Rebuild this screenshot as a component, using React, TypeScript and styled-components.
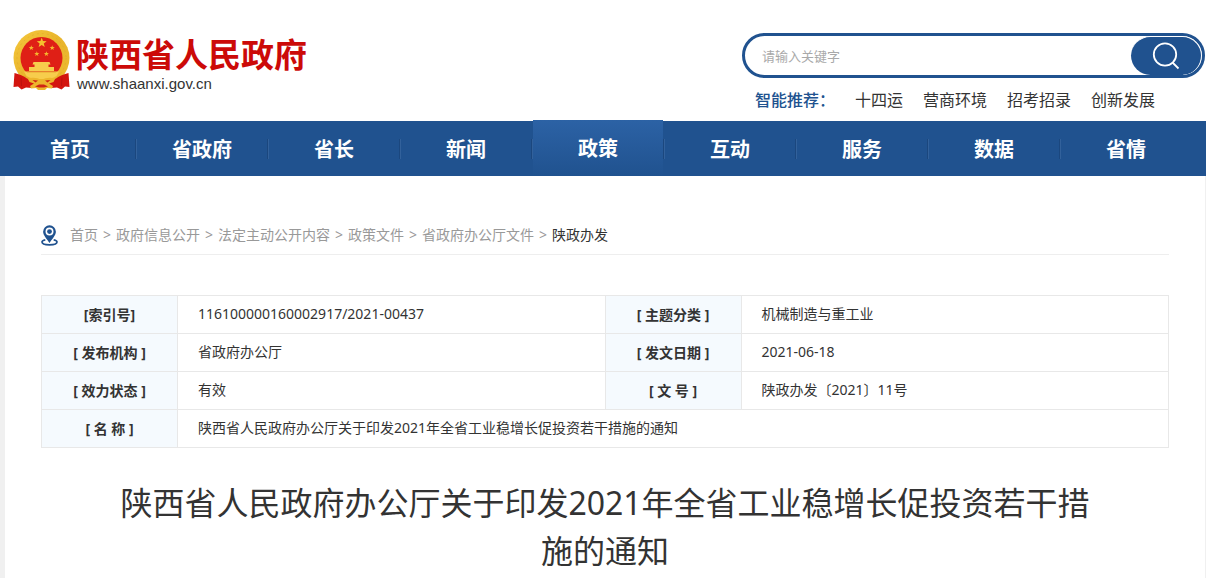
import React from 'react';
import styled, { createGlobalStyle, css } from 'styled-components';

const blue = '#20528f';
const line = '#e8e8e8';

const GlobalStyle = createGlobalStyle`
  *, *::before, *::after { box-sizing: border-box; }
  body {
    margin: 0;
    background: #f0f0f0;
    color: #333;
    font: 14px/20px 'Noto Sans', 'Noto Sans CJK SC', sans-serif;
  }
  a { color: inherit; text-decoration: none; }
  ul, ol, h1 { margin: 0; padding: 0; list-style: none; }
`;

const Page = styled.div`
  overflow: hidden;
`;

const Header = styled.header`
  display: flex;
  justify-content: space-between;
  align-items: flex-start;
  padding: 30px 1px 9px 13px;
  background: #fff;
`;

const Brand = styled.a`
  display: flex;
  align-items: flex-start;
  gap: 5px;
`;

const BrandText = styled.span`
  display: flex;
  flex-direction: column;
  padding-top: 2px;
`;

const BrandName = styled.span`
  color: #cc0a08;
  font-size: 33px;
  line-height: 46px;
  font-weight: 700;
  white-space: nowrap;
`;

const BrandUrl = styled.span`
  padding-left: 1px;
  color: #333;
  font-family: 'Liberation Sans', sans-serif;
  font-size: 15px;
  line-height: 12px;
`;

const SearchArea = styled.div`
  width: 463px;
  padding-top: 3px;
`;

const SearchBox = styled.form`
  display: flex;
  height: 45px;
  border: 3px solid ${blue};
  border-radius: 23px;
  overflow: hidden;
`;

const SearchInput = styled.input`
  flex: 1;
  min-width: 0;
  border: 0;
  outline: 0;
  padding: 0 17px;
  background: transparent;
  font: 13px/20px 'Noto Sans', 'Noto Sans CJK SC', sans-serif;
  &::placeholder { color: #a9a9a9; opacity: 1; }
`;

const SearchButton = styled.button`
  display: flex;
  align-items: center;
  justify-content: center;
  width: 71px;
  padding: 0;
  border: 1px solid #fff;
  border-width: 1px 1px 0 0;
  border-radius: 20px;
  background: ${blue};
  cursor: pointer;
`;

const HotWords = styled.div`
  display: flex;
  gap: 20px;
  padding: 10px 0 0 13px;
  font-size: 16px;
  line-height: 24px;
  white-space: nowrap;
`;

const HotLabel = styled.span`
  color: ${blue};
  font-weight: 500;
`;

const Nav = styled.nav`
  background: ${blue};
`;

const NavList = styled.ul`
  display: flex;
  height: 55px;
  padding-left: 5px;
`;

const NavItem = styled.li`
  display: flex;
  align-items: center;
  width: 132px;
  &::after {
    content: '';
    width: 2px;
    height: 20px;
    border-left: 1px solid #1b477e;
    border-right: 1px solid #32619b;
  }
  &:last-child::after { visibility: hidden; }
`;

const NavLink = styled.a<{ $active?: boolean }>`
  flex: 1;
  height: 55px;
  color: #fff;
  font-size: 20px;
  line-height: 58px;
  font-weight: 700;
  text-align: center;
  ${(p) =>
    p.$active &&
    css`
      height: 56px;
      margin-top: -1px;
      background: linear-gradient(#2c62a5, ${blue});
    `}
`;

const Main = styled.main`
  margin: 0 1px 0 5px;
  padding: 41px 36px 3px;
  background: #fff;
`;

const Crumbs = styled.nav`
  display: flex;
  align-items: center;
  gap: 12px;
  height: 38px;
  border-bottom: 1px solid #eee;
  color: #999;
`;

const CrumbList = styled.ol`
  display: flex;
  padding-bottom: 2px;
`;

const Crumb = styled.li`
  &:not(:last-child)::after {
    content: '>';
    padding: 0 5px;
  }
  &:last-child { color: #333; }
`;

const InfoTable = styled.table`
  width: 100%;
  margin-top: 40px;
  border-collapse: collapse;
  table-layout: fixed;
`;

const Label = styled.th`
  height: 38px;
  padding: 1px 0 0;
  border: 1px solid ${line};
  background: #f5fafe;
  font-weight: 700;
  text-align: center;
`;

const Value = styled.td`
  height: 38px;
  padding: 0 20px 1px;
  border: 1px solid ${line};
`;

const Title = styled.h1`
  padding: 31px 72px 0;
  font-size: 32px;
  line-height: 48px;
  font-weight: 400;
  text-align: center;
`;

const star = (cx: number, cy: number, r: number) =>
  Array.from({ length: 10 }, (_, i) => {
    const a = (Math.PI / 5) * i - Math.PI / 2;
    const d = i % 2 ? r * 0.42 : r;
    return `${(cx + d * Math.cos(a)).toFixed(2)},${(cy + d * Math.sin(a)).toFixed(2)}`;
  }).join(' ');

const Emblem = () => (
  <svg width="58" height="61" viewBox="0 0 58 61" aria-hidden="true">
    <defs>
      <linearGradient id="gold" x1="0" y1="0" x2="1" y2="1">
        <stop offset="0" stopColor="#f5c83c" />
        <stop offset="0.5" stopColor="#e9b52c" />
        <stop offset="1" stopColor="#edba30" />
      </linearGradient>
    </defs>
    <circle cx="28.5" cy="28" r="28" fill="url(#gold)" />
    <circle cx="28.5" cy="28" r="24.5" fill="none" stroke="#d79a22" strokeWidth="1" strokeDasharray="2 3" opacity="0.35" />
    <circle cx="28.5" cy="28" r="21" fill="#df1f16" />
    <polygon points={star(28.7, 12.8, 5.2)} fill="#f5c02e" />
    <polygon points={star(18.3, 17.9, 2.7)} fill="#f5b52e" />
    <polygon points={star(39.2, 17.9, 2.7)} fill="#f5b52e" />
    <polygon points={star(23.8, 23.9, 2.7)} fill="#f5b52e" />
    <polygon points={star(33.4, 23.9, 2.7)} fill="#f5b52e" />
    <path d="M20.500 32 H36.500 L37.500 34.500 H19.500 Z M21.500 34.500 H35.500 V37 H41 V41 H16 V37 H21.500 Z" fill="#f7cd4c" />
    <path d="M11 41.500 H46 L43.500 46 C40 48.500 35 49 28.500 49 C22 49 17 48.500 13.500 46 Z" fill="#f7cd4c" />
    <path d="M14 42 H43" stroke="#e29a26" strokeWidth="0.700" />
    <path d="M1.500 43 C6 44 11 46 14 48.500 C17 50 18.500 50.500 21 50.500 H36 C38.500 50.500 40 50 43 48.500 C46 46 51 44 55.500 43 L56.500 57 L52 56.500 L48.500 59.500 L44 57.500 L38 58 H19 L13 57.500 L8.500 59.500 L5 56.500 L0.500 57 Z" fill="#d3150f" />
    <path d="M15 49 C20 46.500 24 48 28.500 49.500 C33 48 37 46.500 42 49 L40.500 52 L36 53.500 L40 56 L39 58.500 L34 58 L32 60 H25 L23 58 L18 58.500 L17 56 L21 53.500 L16.500 52 Z" fill="#edb52c" />
    <path d="M19.500 50 L25 50.500 L22.500 52.500 Z M37.500 50 L32 50.500 L34.500 52.500 Z M22 56.500 L26 54.500 H31 L35 56.500 L31 57.500 H26 Z" fill="#cf2414" />
    <path d="M8 47.500 L8.500 56 M49 47.500 L48.500 56" stroke="#b5100c" strokeWidth="0.800" />
  </svg>
);

const SearchIcon = () => (
  <svg width="28" height="28" viewBox="0 0 28 28" fill="none" stroke="#fff" strokeWidth="1.8" aria-hidden="true">
    <circle cx="13" cy="12.500" r="11.200" />
    <path d="M20.500 20.500 L26.500 26.500" />
  </svg>
);

const PinIcon = () => (
  <svg width="17" height="21" viewBox="0 0 17 21" aria-hidden="true">
    <path d="M4.300 14.800 C2.300 15.200 1 16 1 17 C1 18.800 4.300 19.800 8.500 19.800 S16 18.800 16 17 C16 16 14.700 15.200 12.700 14.800" fill="none" stroke={blue} strokeWidth="1.700" />
    <path fillRule="evenodd" d="M8.500 0.300 A6.400 6.400 0 0 0 2.100 6.700 C2.100 10.300 6 14 8.500 18 C11 14 14.900 10.300 14.900 6.700 A6.400 6.400 0 0 0 8.500 0.300 Z M8.500 2.600 A4 4 0 1 1 8.500 10.600 A4 4 0 1 1 8.500 2.600 Z" fill={blue} />
    <circle cx="8.500" cy="6.600" r="2.400" fill={blue} />
  </svg>
);

const navItems = ['首页', '省政府', '省长', '新闻', '政策', '互动', '服务', '数据', '省情'];
const hotWords = ['十四运', '营商环境', '招考招录', '创新发展'];
const crumbs = ['首页', '政府信息公开', '法定主动公开内容', '政策文件', '省政府办公厅文件', '陕政办发'];
const rows = [
  ['[索引号]', '116100000160002917/2021-00437', '[ 主题分类 ]', '机械制造与重工业'],
  ['[ 发布机构 ]', '省政府办公厅', '[ 发文日期 ]', '2021-06-18'],
  ['[ 效力状态 ]', '有效', '[ 文 号 ]', '陕政办发〔2021〕11号'],
];

export default function App() {
  return (
    <Page lang="zh-CN">
      <GlobalStyle />
      <Header>
        <Brand href="#">
          <Emblem />
          <BrandText>
            <BrandName>陕西省人民政府</BrandName>
            <BrandUrl>www.shaanxi.gov.cn</BrandUrl>
          </BrandText>
        </Brand>
        <SearchArea>
          <SearchBox role="search" onSubmit={(e) => e.preventDefault()}>
            <SearchInput type="text" aria-label="请输入关键字" placeholder="请输入关键字" />
            <SearchButton type="submit" aria-label="搜索">
              <SearchIcon />
            </SearchButton>
          </SearchBox>
          <HotWords>
            <HotLabel>智能推荐：</HotLabel>
            {hotWords.map((w) => (
              <a href="#" key={w}>{w}</a>
            ))}
          </HotWords>
        </SearchArea>
      </Header>
      <Nav>
        <NavList>
          {navItems.map((n) => (
            <NavItem key={n}>
              <NavLink href="#" $active={n === '政策'}>{n}</NavLink>
            </NavItem>
          ))}
        </NavList>
      </Nav>
      <Main>
        <Crumbs>
          <PinIcon />
          <CrumbList>
            {crumbs.map((c) => (
              <Crumb key={c}><a href="#">{c}</a></Crumb>
            ))}
          </CrumbList>
        </Crumbs>
        <InfoTable>
          <colgroup>
            <col width="136" />
            <col />
            <col width="136" />
            <col />
          </colgroup>
          <tbody>
            {rows.map(([a, b, c, d]) => (
              <tr key={a}>
                <Label scope="row">{a}</Label>
                <Value>{b}</Value>
                <Label scope="row">{c}</Label>
                <Value>{d}</Value>
              </tr>
            ))}
            <tr>
              <Label scope="row">[ 名 称 ]</Label>
              <Value colSpan={3}>陕西省人民政府办公厅关于印发2021年全省工业稳增长促投资若干措施的通知</Value>
            </tr>
          </tbody>
        </InfoTable>
        <Title>陕西省人民政府办公厅关于印发2021年全省工业稳增长促投资若干措施的通知</Title>
      </Main>
    </Page>
  );
}
